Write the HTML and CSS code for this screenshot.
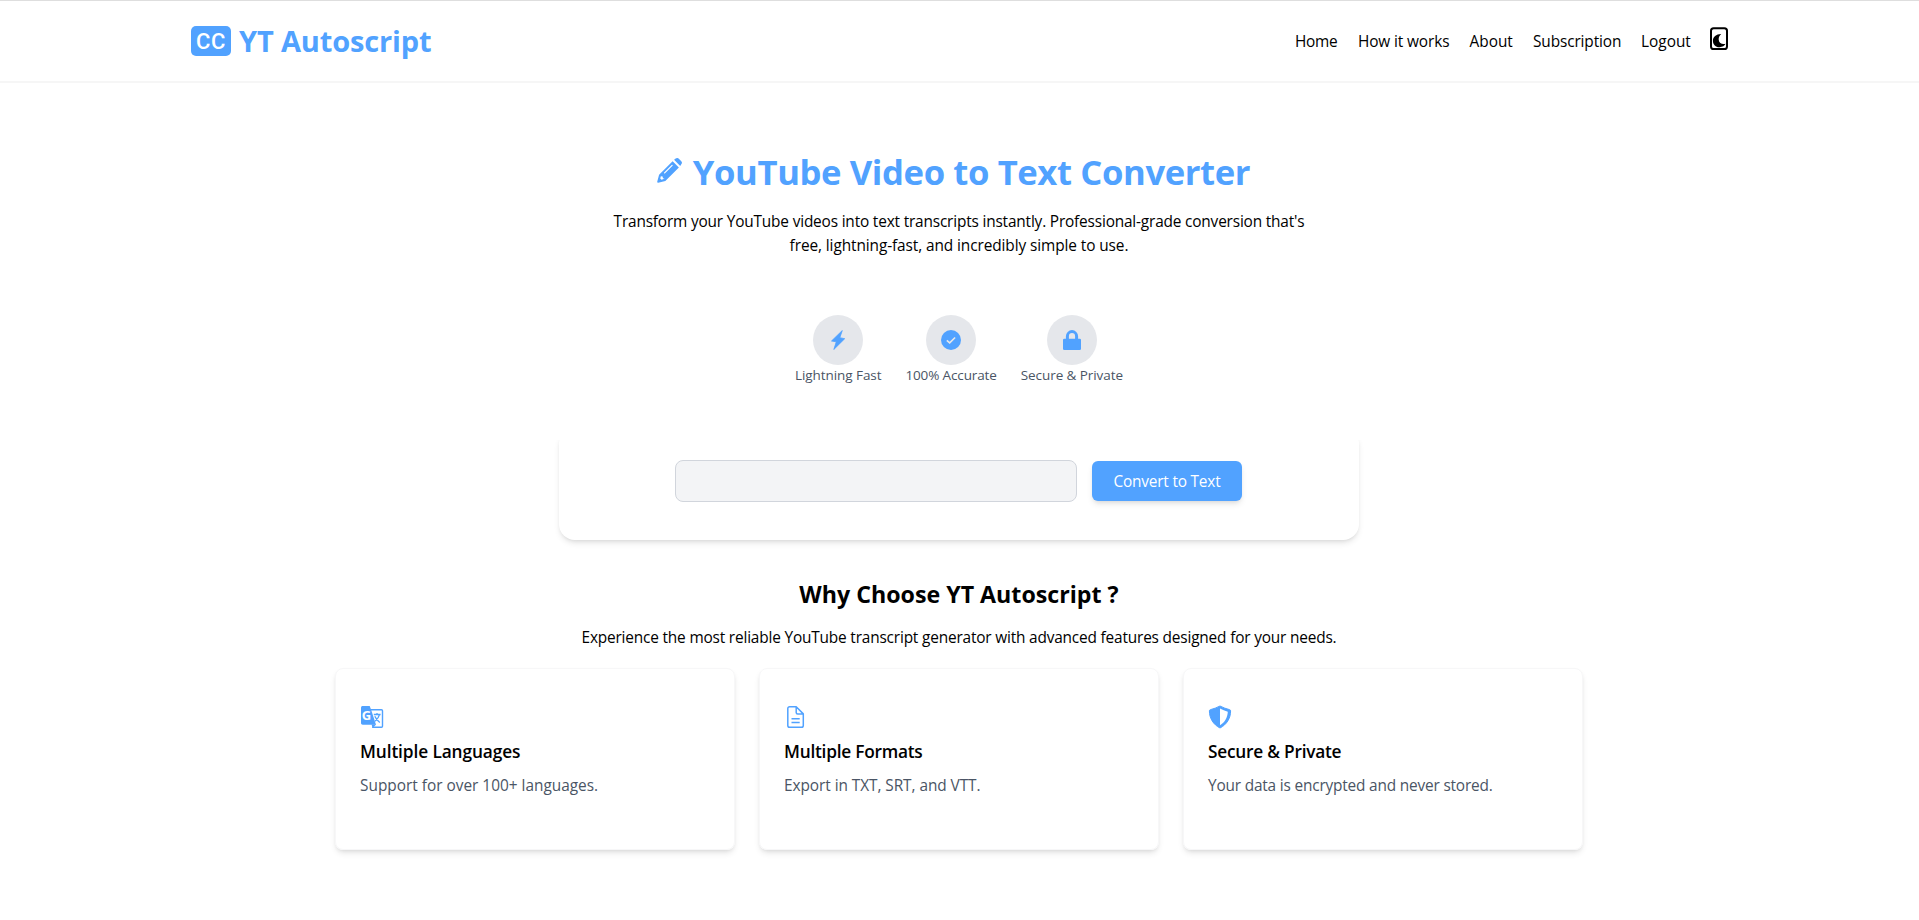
FILE: index.html
```html
<!DOCTYPE html>
<html lang="en">
<head>
<meta charset="utf-8">
<title>YT Autoscript</title>
<link rel="stylesheet" href="styles.css">
</head>
<body>
<header class="header">
  <div class="header-inner">
    <a class="brand"><span class="badge">CC</span><span class="brand-name">YT Autoscript</span></a>
    <nav class="nav">
      <a class="w-home">Home</a><a class="w-how">How it works</a><a class="w-about">About</a><a class="w-sub">Subscription</a><a class="w-logout">Logout</a>
      <svg class="theme" viewBox="0 0 18 24" fill="none"><rect x="1" y="1.2" width="16" height="20.8" rx="2.6" stroke="#000" stroke-width="2"/><path d="M11.200 6.900C6.300 6.800 2.900 9.800 2.900 13.700c0 4 3.200 6.700 6.700 6.500 2.800-.1 5-1.400 6-3.400-3.600.8-6.500-.6-6.900-4.100-.2-2.300.8-4.400 2.500-5.800z" fill="#000"/></svg>
    </nav>
  </div>
</header>
<main class="main">
  <section class="hero">
    <h1 class="hero-title">
      <svg class="pencil" viewBox="0 0 24 24"><path fill="currentColor" d="M15 3l6 6L8 22 1.100 23.700c-.6.2-1-.3-.9-.8L2 16z"/><path fill="currentColor" d="M16.400 1.700l1.500-1.200c1-.7 2.200-.7 3.100.2l2.300 2.300c.9.900.9 2.200 0 3.100L22.300 7.600z"/><path d="M7.300 14.300l7.200-7.200" stroke="#fff" stroke-width="1.200" stroke-linecap="round"/><path d="M3.700 17.400l1.700.3.300 1.700 1.500.4-2.900 1.100-1.200-1.200z" fill="#fff"/></svg>
      <span>YouTube Video to Text Converter</span>
    </h1>
    <p class="hero-text"><span class="line-a">Transform your YouTube videos into text transcripts instantly. Professional-grade conversion that's</span> <span class="line-b">free, lightning-fast, and incredibly simple to use.</span></p>
    <div class="perks">
      <div class="perk"><span class="disc"><svg viewBox="0 0 20 20"><path fill="currentColor" stroke="currentColor" stroke-width=".8" stroke-linejoin="round" d="M14.300.5L3.500 11l4.800.8L5.800 19.500 16.700 8.700l-4.900-1z"/></svg></span><span>Lightning Fast</span></div>
      <div class="perk"><span class="disc"><svg viewBox="0 0 20 20"><circle cx="10" cy="10" r="10" fill="currentColor"/><path d="M5.800 10.300l2.900 2.600 5.400-5.400" fill="none" stroke="#e5e7eb" stroke-width="1.600"/></svg></span><span class="perk-accurate">100% Accurate</span></div>
      <div class="perk"><span class="disc"><svg viewBox="0 0 20 20"><rect x="1" y="8.700" width="18" height="11.300" rx="1.300" fill="currentColor"/><path d="M5.400 9.500V6.200a4.600 4.600 0 0 1 9.200 0v3.300" fill="none" stroke="currentColor" stroke-width="3"/></svg></span><span>Secure &amp; Private</span></div>
    </div>
  </section>
  <form class="converter">
    <input class="url" type="text" aria-label="Video URL">
    <button class="convert" type="button">Convert to Text</button>
  </form>
  <section class="why">
    <h2 class="why-title">Why Choose YT Autoscript ?</h2>
    <p class="why-text">Experience the most reliable YouTube transcript generator with advanced features designed for your needs.</p>
    <div class="cards">
      <article class="card">
        <svg class="card-icon" viewBox="0 0 24 24"><path d="M10.500 4.700h11c.6 0 1 .4 1 1v15.600c0 .6-.4 1-1 1h-9.300" fill="#fff" stroke="currentColor" stroke-width="1.400"/><path d="M2.700 1h7l1.400 3.700 4.900 15H2.700C1.700 19.700 1 19 1 18V2.700C1 1.700 1.700 1 2.700 1z" fill="currentColor"/><path d="M11.600 19.500h4.500L12.600 23z" fill="currentColor"/><path d="M13.800 9.500h6.800M17 8v1.500M19.500 9.700c-.8 3-2.600 5-4.500 6.500M14.800 11.200c1 2.400 2.800 4.500 5 6.200" fill="none" stroke="currentColor" stroke-width="1.300"/><text class="g" x="1.700" y="15.300">G</text></svg>
        <h3 class="card-title t-lang">Multiple Languages</h3>
        <p class="card-text c-lang">Support for over 100+ languages.</p>
      </article>
      <article class="card">
        <svg class="card-icon" viewBox="0 0 24 24" fill="none" stroke="currentColor" stroke-width="1.500" stroke-linejoin="round"><path d="M12.200 1.800H5.600c-1 0-1.800.8-1.800 1.800v16.800c0 1 .8 1.800 1.800 1.800h11.900c1 0 1.800-.8 1.800-1.800V8.900zM12.200 1.800v5.600c0 .8.700 1.500 1.500 1.500h5.600M7.500 13.800h8.200M7.500 17.400h8.200"/></svg>
        <h3 class="card-title t-narrow">Multiple Formats</h3>
        <p class="card-text c-formats">Export in TXT, SRT, and VTT.</p>
      </article>
      <article class="card">
        <svg class="card-icon" viewBox="0 0 24 24"><path d="M12 1C9 2.600 5.500 3.900 2.300 4.700c-.6.200-.9.500-.9 1.100C1.300 13 5.200 19.600 12 23c6.800-3.400 10.700-10 10.600-17.200 0-.6-.3-.9-.9-1.100C18.500 3.900 15 2.600 12 1z" fill="currentColor" stroke="currentColor" stroke-width="1" stroke-linejoin="round"/><path d="M12 3.600v16.600c4.900-2.700 7.600-7.700 7.800-13.400C17 6 14.400 4.900 12 3.600z" fill="#fff"/></svg>
        <h3 class="card-title t-narrow">Secure &amp; Private</h3>
        <p class="card-text c-secure">Your data is encrypted and never stored.</p>
      </article>
    </div>
  </section>
</main>
</body>
</html>
```

FILE: styles.css
```css
* { box-sizing: border-box; }
body {
  margin: 0;
  min-height: 920px;
  background: #fff;
  color: #000;
  font: 15.4px/24px "Open Sans", "Noto Sans", sans-serif;
}
h1, h2, h3, p { margin: 0; }
svg { display: block; flex: none; }

.header {
  height: 83px;
  border-top: 1px solid #dedede;
  border-bottom: 2px solid #f6f6f6;
}
.header-inner {
  width: 1537px;
  height: 80px;
  margin: 0 auto;
  display: flex;
  justify-content: space-between;
  align-items: center;
}
.brand { display: flex; align-items: center; gap: 8px; color: #51a2ff; }
.badge {
  width: 40px;
  height: 30px;
  border-radius: 5px;
  background: #51a2ff;
  color: #fff;
  font: 500 22px/31px Roboto, sans-serif;
  letter-spacing: .6px;
  text-align: center;
}
.brand-name { font-size: 29px; line-height: 36px; font-weight: 700; letter-spacing: -.15px; margin-top: -1px; }
.nav { display: flex; align-items: center; padding-top: 2px; letter-spacing: -.12px; white-space: nowrap; }
.w-home { width: 63px; letter-spacing: -.3px; }
.w-how { width: 111.500px; }
.w-about { width: 63.500px; letter-spacing: 0; }
.w-sub { width: 108px; }
.w-logout { width: 69px; letter-spacing: 0; }
.theme { width: 18px; height: 24px; margin-top: -6px; }

.main { padding-right: 1px; }
.hero { display: flex; flex-direction: column; align-items: center; padding-top: 69px; }
.hero-title {
  display: flex;
  align-items: center;
  gap: 11px;
  padding-right: 11px;
  color: #51a2ff;
  font-size: 34.65px;
  line-height: 40px;
  font-weight: 700;
  letter-spacing: -.39px;
}
.pencil { width: 25px; height: 25px; margin-top: -4px; }
.hero-text { margin-top: 18px; width: 720px; text-align: center; }
.line-a { letter-spacing: -.173px; }
.line-b { letter-spacing: -.09px; }
.perks {
  display: flex;
  gap: 24px;
  margin-top: 57px;
  color: #4a5565;
  font-size: 13.5px;
  line-height: 20px;
  letter-spacing: -.07px;
}
.perk { display: flex; flex-direction: column; align-items: center; }
.perk-accurate { letter-spacing: -.13px; }
.disc { width: 50px; height: 50px; border-radius: 50%; background: #e5e7eb; color: #51a2ff; display: grid; place-items: center; }
.disc svg { width: 20px; height: 20px; }

.converter {
  width: 800px;
  height: 112px;
  margin: 43px auto 0;
  padding: 32px 117px 0 116px;
  display: flex;
  gap: 15px;
  border-radius: 16px;
  box-shadow: 0 4px 6px -1px rgb(0 0 0 / .1), 0 2px 4px -2px rgb(0 0 0 / .1);
  clip-path: inset(12px -20px -20px -20px);
}
.url { width: 402px; height: 42px; border: 1px solid #d1d5dc; border-radius: 8px; background: #f3f4f6; }
.convert {
  width: 150px;
  height: 40px;
  margin-top: 1px;
  padding: 2px 0 0;
  border: 0;
  border-radius: 6px;
  background: #51a2ff;
  color: #fff;
  font: 15.4px/24px "Open Sans", sans-serif;
  letter-spacing: -.2px;
  box-shadow: 0 4px 6px -1px rgb(0 0 0 / .1), 0 2px 4px -2px rgb(0 0 0 / .1);
}

.why { padding-top: 38px; text-align: center; }
.why-title { font-size: 23.2px; line-height: 32px; font-weight: 700; }
.why-text { margin-top: 16px; letter-spacing: -.174px; }
.cards { display: grid; grid-template-columns: repeat(3, 400px); gap: 24px; width: 1248px; margin: 18px auto 0; text-align: left; }
.card {
  height: 182px;
  padding: 36px 24px 0;
  border: 1px solid #f7f7f8;
  border-radius: 8px;
  box-shadow: 0 4px 6px -1px rgb(0 0 0 / .1), 0 2px 4px -2px rgb(0 0 0 / .1);
}
.card-icon { width: 24px; height: 24px; color: #51a2ff; }
.g { font: 700 13px "Open Sans", sans-serif; fill: #fff; }
.card-title { margin-top: 9px; font-size: 17.3px; line-height: 28px; font-weight: 600; }
.t-lang { letter-spacing: -.11px; }
.t-narrow { letter-spacing: -.24px; }
.card-text { margin-top: 8px; color: #4a5565; }
.c-lang { letter-spacing: 0; }
.c-formats { letter-spacing: -.06px; }
.c-secure { letter-spacing: -.18px; }
```
